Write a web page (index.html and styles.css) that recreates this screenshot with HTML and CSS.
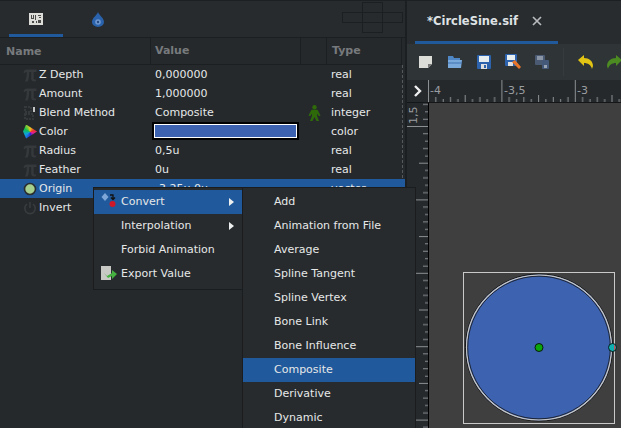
FILE: index.html
```html
<!DOCTYPE html>
<html lang="en">
<head>
<meta charset="utf-8">
<title>CircleSine.sif</title>
<link rel="stylesheet" href="styles.css">
</head>
<body>
<svg class="defs" width="0" height="0">
  <defs>
    <symbol id="pi" viewBox="0 0 14 14">
      <path d="M.5 4.500C1 2.500 2 1.500 4 1.500H13.500V4H10.700V10.500C10.700 11.300 11.200 11.600 13 11.400V13.300C9.800 13.800 8.200 13 8.200 10.500V4H6.200C6.200 8 5.800 11 4.700 13.500H2C3.200 11 3.800 8 3.800 4C2.700 4 2.200 4.400 1.800 5.200z" fill="#35393c"/>
    </symbol>
  </defs>
</svg>
<div class="app">
  <section class="params">
    <div class="panel-tabs">
      <div class="panel-tab active">
        <svg width="14" height="12" viewBox="0 0 14 12"><rect width="14" height="12" fill="#dcdcd8"/><path d="M2 2h1v3h1V2h1v4H2zM6 2h1v5H6zM9 2h3v1H9zM10 4h2v1h-2zM3 8h2v2H3zM7 8h1v2H7zM9 7h3v3H9z" fill="#4a4a4a"/></svg>
      </div>
      <div class="panel-tab second">
        <svg width="12" height="15" viewBox="0 0 12 15"><path d="M6 0C5 3 0 6 0 10a6 5 0 0 0 12 0C12 6 7 3 6 0z" fill="#2a62ab"/><circle cx="6" cy="10" r="2.800" fill="#6f98d0"/><circle cx="6" cy="10" r="1.200" fill="#24497f"/></svg>
      </div>
      <div class="dock-cross">
        <span class="dock top"></span>
        <span class="dock left"></span>
        <span class="dock mid"></span>
        <span class="dock right"></span>
        <span class="dock bottom"></span>
      </div>
    </div>
    <div class="table">
      <div class="row head">
        <div class="c-name">Name</div>
        <div class="c-value">Value</div>
        <div class="c-flag"></div>
        <div class="c-type">Type</div>
      </div>
      <div class="row">
        <div class="c-name"><span class="ico"><svg width="14" height="14"><use href="#pi"/></svg></span>Z Depth</div>
        <div class="c-value">0,000000</div><div class="c-flag"></div><div class="c-type">real</div>
      </div>
      <div class="row">
        <div class="c-name"><span class="ico"><svg width="14" height="14"><use href="#pi"/></svg></span>Amount</div>
        <div class="c-value">1,000000</div><div class="c-flag"></div><div class="c-type">real</div>
      </div>
      <div class="row">
        <div class="c-name"><span class="ico"><svg width="12" height="14" viewBox="0 0 12 14"><path d="M1 1h6v5H1zM1 8h8v5H1z" fill="none" stroke="#35393c" stroke-width="2" stroke-dasharray="2 1"/><rect x="9" y="1" width="2" height="5" fill="#c4c4c4"/></svg></span>Blend Method</div>
        <div class="c-value">Composite</div>
        <div class="c-flag"><svg width="13" height="16" viewBox="0 0 13 16"><circle cx="6.500" cy="2.200" r="2.200" fill="#2f6a0a"/><path d="M3.500 4.800h6l3 5.700-1.600.8L9 8.500V11l2 5H8.500l-2-4-2 4H2l2-5V8.500l-1.900 2.800-1.600-.8z" fill="#2f6a0a"/></svg></div>
        <div class="c-type">integer</div>
      </div>
      <div class="row">
        <div class="c-name"><span class="ico"><span class="wheel"></span></span>Color</div>
        <div class="c-value"><span class="swatch"></span></div><div class="c-flag"></div><div class="c-type">color</div>
      </div>
      <div class="row">
        <div class="c-name"><span class="ico"><svg width="14" height="14"><use href="#pi"/></svg></span>Radius</div>
        <div class="c-value">0,5u</div><div class="c-flag"></div><div class="c-type">real</div>
      </div>
      <div class="row">
        <div class="c-name"><span class="ico"><svg width="14" height="14"><use href="#pi"/></svg></span>Feather</div>
        <div class="c-value">0u</div><div class="c-flag"></div><div class="c-type">real</div>
      </div>
      <div class="row selected">
        <div class="c-name"><span class="ico"><svg width="14" height="14" viewBox="0 0 14 14"><circle cx="7" cy="7" r="5.500" fill="#a6d08e" stroke="#2a2e30" stroke-width="1.600"/></svg></span>Origin</div>
        <div class="c-value">-3,25u,0u</div><div class="c-flag"></div><div class="c-type">vector</div>
      </div>
      <div class="row">
        <div class="c-name"><span class="ico"><svg width="14" height="14" viewBox="0 0 14 14"><path d="M4 3.200a5.200 5.200 0 1 0 6 0" fill="none" stroke="#383c3f" stroke-width="1.600"/><path d="M7 1v6" stroke="#383c3f" stroke-width="1.600"/></svg></span>Invert</div>
        <div class="c-value"></div><div class="c-flag"></div><div class="c-type"></div>
      </div>
    </div>
  </section>

  <section class="workspace">
    <div class="doc-tabs">
      <div class="doc-tab"><span>*CircleSine.sif</span>
        <svg class="close" width="10" height="10" viewBox="0 0 10 10"><path d="M1 1l8 8M9 1l-8 8" stroke="#b8babc" stroke-width="1.700"/></svg>
      </div>
    </div>
    <div class="toolbar">
      <svg width="15" height="14" viewBox="0 0 15 14"><path d="M1 1h13v8l-4 4H1z" fill="#dcdcd8"/><path d="M14 9l-4 4V9z" fill="#777"/></svg>
      <svg width="16" height="14" viewBox="0 0 16 14"><path d="M1 1h5l1 2h6v3H1z" fill="#4f86c6"/><path d="M1 5h14l-1 8H1z" fill="#7aa9dc"/><path d="M1 8h14" stroke="#3f72b0"/></svg>
      <svg width="14" height="14" viewBox="0 0 14 14"><rect width="14" height="14" rx="1" fill="#2d62ad"/><rect x="2" y="1" width="10" height="6" fill="#e6eef0"/><rect x="4" y="9" width="6" height="5" fill="#e0e0e0"/><rect x="7" y="10" width="2" height="3" fill="#2d62ad"/></svg>
      <svg width="16" height="16" viewBox="0 0 16 16"><rect width="12" height="12" rx="1" fill="#2d62ad"/><rect x="2" y="1" width="8" height="5" fill="#e6eef0"/><rect x="3" y="8" width="5" height="4" fill="#e0e0e0"/><path d="M7 8l3-2 6 7-2 2z" fill="#e8762a"/></svg>
      <svg width="14" height="14" viewBox="0 0 14 14"><rect width="10" height="10" rx="1" fill="#4a5a72"/><rect x="2" y="1" width="6" height="4" fill="#8a96a6"/><rect x="7" y="5" width="7" height="9" rx="1" fill="#44587a"/><rect x="9" y="10" width="3" height="3" fill="#98a4b4"/></svg>
      <span class="tool-sep"></span>
      <svg width="15" height="14" viewBox="0 0 15 14"><path d="M0 5l6-5v3c5 0 9 3 9 8l-1 3c-1-4-4-6-8-6v3z" fill="#e2c414"/></svg>
      <svg width="15" height="14" viewBox="0 0 15 14"><path d="M15 5L9 0v3C4 3 0 6 0 11l1 3c1-4 4-6 8-6v3z" fill="#4c8a22"/></svg>
    </div>
    <div class="ruler-top">
      <div class="corner">
        <svg width="10" height="12" viewBox="0 0 10 12"><path d="M2 1l5 5-5 5" fill="none" stroke="#efefef" stroke-width="2.400"/></svg>
      </div>
      <div class="h-ruler">
        <svg width="193" height="22" viewBox="0 0 193 22">
          <defs>
            <pattern id="hticks" x="0" y="0" width="73.400" height="22" patternUnits="userSpaceOnUse">
              <path d="M.5 0v22M7.800 17v5M15.200 19v3M22.500 17v5M29.900 19v3M37.200 15v7M44.500 19v3M51.900 17v5M59.200 19v3M66.600 17v5" stroke="#8d9093" fill="none"/>
            </pattern>
          </defs>
          <rect width="193" height="22" fill="url(#hticks)"/>
          <text x="2" y="14" class="ruler-text">-4</text>
          <text x="76" y="14" class="ruler-text">-3,5</text>
          <text x="149" y="14" class="ruler-text">-3</text>
        </svg>
      </div>
    </div>
    <div class="view">
      <div class="v-ruler">
        <svg width="21" height="325" viewBox="0 0 21 325">
          <defs>
            <pattern id="vticks" x="0" y="23" width="21" height="73.400" patternUnits="userSpaceOnUse">
              <path d="M0 .5h21M16 7.800h5M18 15.200h3M16 22.500h5M18 29.900h3M12 37.200h9M18 44.500h3M16 51.900h5M18 59.200h3M16 66.600h5" stroke="#8d9093" fill="none"/>
            </pattern>
          </defs>
          <rect width="21" height="325" fill="url(#vticks)"/>
          <text class="ruler-text" transform="translate(10 21) rotate(-90)">1,5</text>
        </svg>
      </div>
      <div class="canvas">
        <svg class="art" width="192" height="325" viewBox="0 0 192 325">
          <rect x="34.500" y="169.500" width="151" height="151" fill="none" stroke="#c9c9c9"/>
          <circle cx="110" cy="244.500" r="73.500" fill="#3c62b0" stroke="#111" stroke-width="1"/>
          <circle cx="110" cy="244.500" r="72.400" fill="none" stroke="#c4c4c4" stroke-width="1.400"/>
          <circle cx="110" cy="244.500" r="71.300" fill="none" stroke="#151515" stroke-width=".8"/>
          <circle cx="110" cy="244.500" r="4" fill="#0aa70a" stroke="#0a1a0a"/>
          <circle cx="183.500" cy="244.500" r="4" fill="#10b0b0" stroke="#0a1a1a"/>
          <path d="M185 241.500v6a4 4 0 0 0 0-6z" fill="#d84a5a"/>
        </svg>
      </div>
    </div>
  </section>

  <div class="menu menu-main">
    <div class="item hot"><span class="item-ico"><svg width="16" height="16" viewBox="0 0 16 16"><path d="M4 0l3.500 4L4 8 .5 4z" fill="#7ea6d8"/><path d="M9 2h3v4m-2-1.500l2 2 2-2" fill="none" stroke="#111" stroke-width="1.300"/><circle cx="11.500" cy="11" r="3" fill="#d01828"/></svg></span>Convert<span class="arrow"></span></div>
    <div class="item"><span class="item-ico"></span>Interpolation<span class="arrow"></span></div>
    <div class="item"><span class="item-ico"></span>Forbid Animation</div>
    <div class="item"><span class="item-ico"><svg width="16" height="16" viewBox="0 0 16 16"><path d="M0 1h10v14H0z" fill="#c8c8c4"/><path d="M3 8l3 3 5-3V5l5 4-5 5v-3l-4 2z" fill="#46b040"/></svg></span>Export Value</div>
  </div>

  <div class="menu menu-sub">
    <div class="item">Add</div>
    <div class="item">Animation from File</div>
    <div class="item">Average</div>
    <div class="item">Spline Tangent</div>
    <div class="item">Spline Vertex</div>
    <div class="item">Bone Link</div>
    <div class="item">Bone Influence</div>
    <div class="item hot">Composite</div>
    <div class="item">Derivative</div>
    <div class="item">Dynamic</div>
  </div>
</div>
</body>
</html>
```

FILE: styles.css
```css
* { box-sizing: border-box; }
html, body { margin: 0; padding: 0; }
body {
  width: 621px;
  height: 428px;
  overflow: hidden;
  background: #25292c;
  color: #e6e8e8;
  font: 11px/19px "DejaVu Sans", sans-serif;
}
.defs { position: absolute; }
.app {
  position: relative;
  display: flex;
  width: 621px;
  height: 428px;
  overflow: hidden;
}
svg { display: block; }

/* parameters panel */
.params {
  flex: 0 0 405px;
  height: 428px;
  background: #25292c;
}
.panel-tabs {
  position: relative;
  display: flex;
  height: 38px;
  padding-left: 9px;
  background: #272b2e;
  border-top: 1px solid #1d2022;
  border-bottom: 1px solid #1c1f21;
}
.panel-tab {
  display: flex;
  justify-content: center;
  width: 54px;
  height: 36px;
  padding-top: 12px;
}
.panel-tab.active { border-bottom: 3px solid #215a9c; }
.panel-tab.second { margin-left: 8px; padding-top: 11px; }
.dock-cross {
  position: absolute;
  left: 343px;
  top: 1px;
  display: grid;
  grid-template-columns: 20px 20px 20px;
  grid-template-rows: 10px 10px 10px;
}
.dock { border: 1px solid #1c1f21; margin: 0 0 -1px -1px; }
.dock.top { grid-column: 2; grid-row: 1; }
.dock.left { grid-column: 1; grid-row: 2; }
.dock.mid { grid-column: 2; grid-row: 2; }
.dock.right { grid-column: 3; grid-row: 2; }
.dock.bottom { grid-column: 2; grid-row: 3; }

.table {
  width: 405px;
  background-image: repeating-linear-gradient(to bottom, #55595c 0 3px, transparent 3px 5px);
  background-size: 1px 152px;
  background-position: 402px 27px;
  background-repeat: no-repeat;
}
.row {
  display: grid;
  grid-template-columns: 151px 150px 26px 75px;
  height: 19px;
  width: 402px;
}
.row > div {
  padding-left: 4px;
  white-space: nowrap;
  overflow: hidden;
}
.row .c-name {
  display: flex;
  align-items: center;
  padding-left: 23px;
}
.row .c-flag {
  display: flex;
  align-items: center;
  justify-content: center;
  padding-left: 0;
}
.row.head {
  height: 27px;
  line-height: 25px;
  font-weight: bold;
  color: #777a7d;
  border-bottom: 1px solid #1c1f21;
}
.row.head > div { border-right: 1px solid #1c1f21; }
.row.head .c-name { padding-left: 6px; }
.row.head .c-type { padding-left: 5px; }
.row.selected { background: #215a9c; width: 405px; grid-template-columns: 151px 150px 26px 78px; }
.ico {
  display: flex;
  align-items: center;
  justify-content: center;
  flex: 0 0 14px;
  width: 14px;
  margin-right: 2px;
}
.wheel {
  display: block;
  width: 14px;
  height: 14px;
  background: conic-gradient(#e8d020 0deg, #f03030 70deg, #e020a0 110deg, #3020d0 170deg, #10a0e0 240deg, #10c050 300deg, #e8d020 360deg);
  clip-path: polygon(22% 0, 100% 50%, 22% 100%, 0 50%);
}
.swatch {
  display: block;
  width: 147px;
  height: 18px;
  margin-left: -3px;
  background: #3c62b0;
  border: 2px solid #000;
  outline: 1px solid #fff;
  outline-offset: -3px;
}

/* workspace */
.workspace {
  flex: 0 0 216px;
  height: 428px;
  display: flex;
  flex-direction: column;
  background: #25292c;
  border-left: 2px solid #1c1f21;
}
.doc-tabs {
  height: 44px;
  padding-left: 8px;
  background: #282c2f;
  border-top: 1px solid #1d2022;
}
.doc-tab {
  display: flex;
  align-items: center;
  width: 143px;
  height: 43px;
  padding-left: 12px;
  font-size: 11.5px;
  font-weight: bold;
  color: #dfe2e4;
  border-bottom: 3px solid #215a9c;
}
.close { margin-left: 14px; }
.toolbar {
  display: flex;
  align-items: center;
  gap: 14px;
  height: 36px;
  padding-left: 11px;
  background: #2f3437;
}
.tool-sep {
  width: 1px;
  height: 28px;
  background: #363b3e;
}
.ruler-top {
  display: flex;
  height: 23px;
  background: #25292c;
  border-bottom: 1px solid #141618;
}
.corner {
  display: flex;
  align-items: center;
  justify-content: center;
  width: 21px;
}
.h-ruler { flex: 1; overflow: hidden; }
.ruler-text {
  font: 11px "DejaVu Sans", sans-serif;
  fill: #9a9da0;
}
.view {
  display: flex;
  flex: 1;
  min-height: 0;
}
.v-ruler {
  flex: 0 0 21px;
  overflow: hidden;
}
.canvas {
  flex: 1;
  position: relative;
  background: #3f3f3f;
  border-left: 1px solid #000;
}
.art { position: absolute; left: 0; top: 0; }

/* context menus */
.menu {
  position: absolute;
  background: #272b2e;
  border: 1px solid #1a1c1e;
  padding: 2px 0;
}
.menu-main { left: 93px; top: 187px; width: 150px; height: 103px; }
.menu-sub { left: 242px; top: 187px; width: 174px; height: 260px; }
.item {
  position: relative;
  display: flex;
  align-items: center;
  height: 24px;
  padding-bottom: 2px;
  color: #e6e8e8;
  white-space: nowrap;
}
.menu-sub .item { padding-left: 31px; }
.item.hot { background: #215a9c; }
.item-ico {
  flex: 0 0 27px;
  padding-left: 7px;
}
.arrow {
  position: absolute;
  right: 8px;
  top: 8px;
  border-left: 5px solid #eef0f0;
  border-top: 4px solid transparent;
  border-bottom: 4px solid transparent;
}
```
